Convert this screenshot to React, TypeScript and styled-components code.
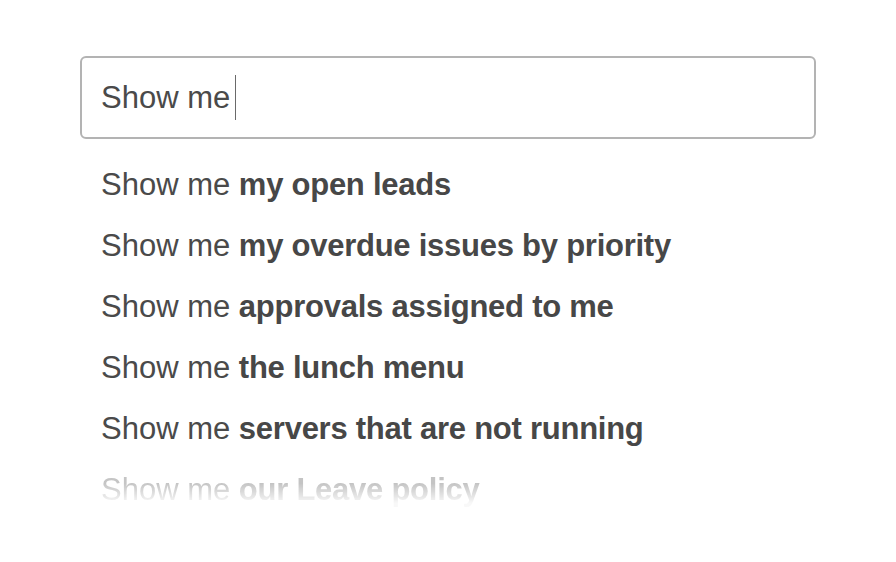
import React from "react";
import styled, { createGlobalStyle } from "styled-components";

const GlobalStyle = createGlobalStyle`
  html, body { margin: 0; padding: 0; background: #ffffff; }
  body { font-family: "Liberation Sans", Arial, Helvetica, sans-serif; }
`;

const Page = styled.div`
  padding: 56px 80px 0 80px;
  box-sizing: border-box;
  width: 896px;
  height: 562px;
  overflow: hidden;
`;

const SearchBox = styled.div`
  box-sizing: border-box;
  height: 83px;
  border: 2px solid #b3b3b3;
  border-radius: 6px;
  display: flex;
  align-items: center;
  padding: 0 19px;
  font-size: 31px;
  color: #4a4a4a;
`;

const Caret = styled.span`
  display: inline-block;
  width: 1px;
  height: 45px;
  background: #6a6a6a;
  margin-left: 5px;
`;

const List = styled.ul`
  list-style: none;
  margin: 15px 0 0 0;
  padding: 0 0 0 21px;
`;

const Item = styled.li<{ $faded?: boolean }>`
  font-size: 31px;
  line-height: 61px;
  height: 61px;
  color: #4a4a4a;
  white-space: nowrap;
  ${(p) =>
    p.$faded
      ? `
    -webkit-mask-image: linear-gradient(to bottom, rgba(0,0,0,0.32) 40%, rgba(0,0,0,0.04) 72%);
    mask-image: linear-gradient(to bottom, rgba(0,0,0,0.32) 40%, rgba(0,0,0,0.04) 72%);
  `
      : ""}
`;

const Strong = styled.b`
  font-weight: 700;
  color: #474747;
  letter-spacing: -0.25px;
`;

const suggestions = [
  "my open leads",
  "my overdue issues by priority",
  "approvals assigned to me",
  "the lunch menu",
  "servers that are not running",
  "our Leave policy",
];

export default function App() {
  return (
    <>
      <GlobalStyle />
      <Page>
        <SearchBox>
          <span>Show me</span>
          <Caret />
        </SearchBox>
        <List>
          {suggestions.map((s, i) => (
            <Item key={s} $faded={i === suggestions.length - 1}>
              Show me <Strong>{s}</Strong>
            </Item>
          ))}
        </List>
      </Page>
    </>
  );
}
